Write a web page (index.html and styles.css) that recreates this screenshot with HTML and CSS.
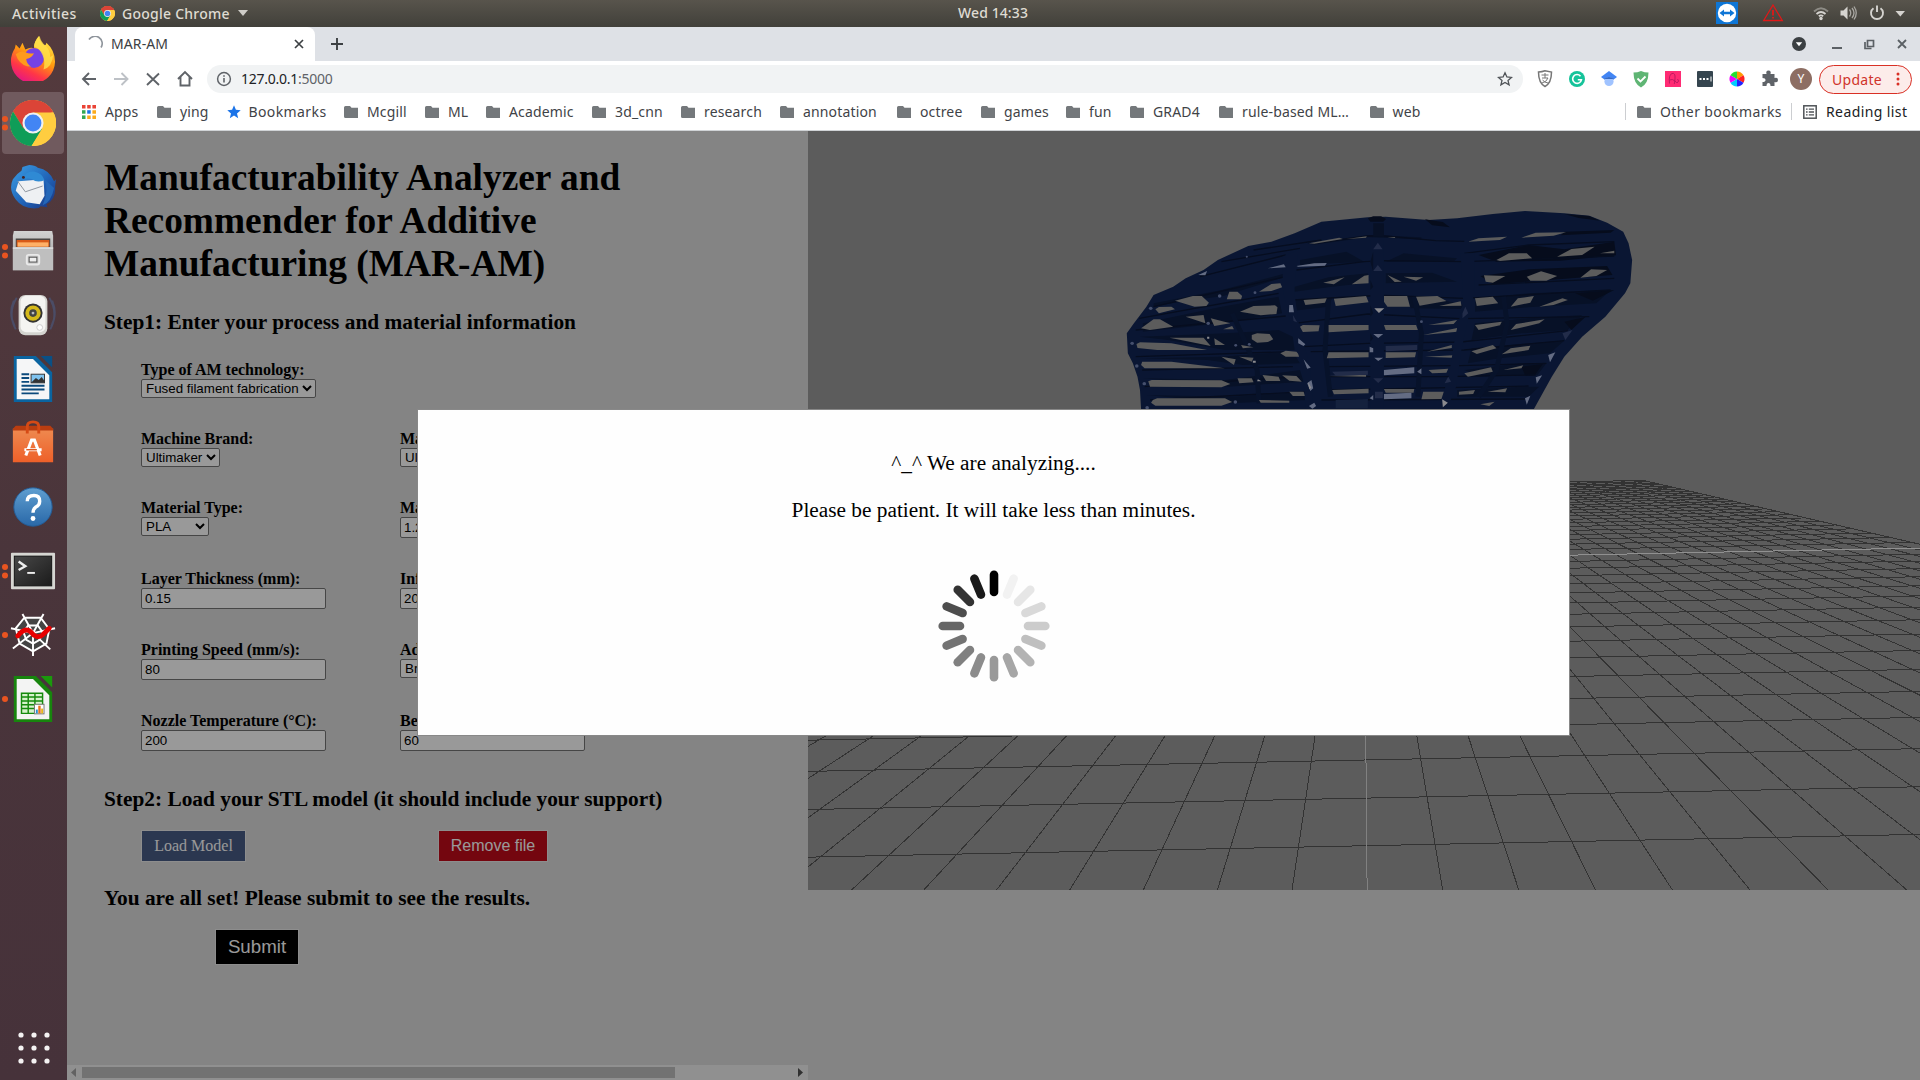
FILE: index.html
```html
<!DOCTYPE html>
<html lang="en">
<head>
<meta charset="utf-8">
<title>MAR-AM</title>
<link rel="stylesheet" href="styles.css">
</head>
<body>
<svg width="0" height="0" class="defs">
  <defs>
    <symbol id="folder" viewBox="0 0 14 12"><path fill="#74787b" d="M0 1.5Q0 0 1.5 0H6l1.5 1.8H14V12H1.5Q0 12 0 10.500z"/></symbol>
    <symbol id="chrome" viewBox="0 0 48 48">
      <circle cx="24" cy="24" r="24" fill="#fc4"/>
      <path fill="#db4437" d="M24 24 3.200 12A24 24 0 0 1 44.800 12z"/>
      <path fill="#db4437" d="M3.200 12 14 30 24 13H45A24 24 0 0 0 3.200 12z"/>
      <path fill="#0f9d58" d="M3.200 12A24 24 0 0 0 22.500 48L34 30 14 29.500z"/>
      <path fill="#ffcd40" d="M24 13H45.400A24 24 0 0 1 22.500 48L34 29z"/>
      <circle cx="24" cy="24" r="11" fill="#f1f1f1"/><circle cx="24" cy="24" r="8.800" fill="#4285f4"/>
    </symbol>
    <linearGradient id="fx" x1="0.8" y1="0" x2="0.300" y2="1"><stop offset="0" stop-color="#fff44f"/><stop offset=".45" stop-color="#ff980e"/><stop offset=".75" stop-color="#ff3647"/><stop offset="1" stop-color="#e31587"/></linearGradient>
    <linearGradient id="tb" x1="0" y1="0" x2="1" y2="1"><stop offset="0" stop-color="#3ba0e6"/><stop offset=".6" stop-color="#1f5fb4"/><stop offset="1" stop-color="#1b2f78"/></linearGradient>
    <linearGradient id="cab" x1="0" y1="0" x2="0" y2="1"><stop offset="0" stop-color="#d2d2d2"/><stop offset="1" stop-color="#969696"/></linearGradient>
    <linearGradient id="bag" x1="0" y1="0" x2="0" y2="1"><stop offset="0" stop-color="#ee8a50"/><stop offset="1" stop-color="#ee6029"/></linearGradient>
    <linearGradient id="hlp" x1="0" y1="0" x2="0" y2="1"><stop offset="0" stop-color="#5f9ed0"/><stop offset="1" stop-color="#2968a8"/></linearGradient>
    <linearGradient id="trm" x1="0" y1="0" x2="1" y2="1"><stop offset="0" stop-color="#484848"/><stop offset="1" stop-color="#1b1b1b"/></linearGradient>
  </defs>
</svg>

<header class="topbar">
  <span class="activities">Activities</span>
  <svg class="tb-chrome" width="15" height="15"><use href="#chrome"/></svg>
  <span class="appname">Google Chrome</span>
  <svg class="caret" width="10" height="6"><path d="M0 0h10L5 6z" fill="#cfcdc8"/></svg>
  <span class="clock">Wed 14:33</span>
  <svg class="tray" width="200" height="27" viewBox="1720 0 200 27">
    <rect x="1716" y="2" width="22" height="22" fill="#0e76d6"/>
    <circle cx="1727" cy="13" r="9.200" fill="#fff"/>
    <path d="M1719.500 13l4.500-3.500v2.300h6V9.500l4.500 3.500-4.500 3.500v-2.300h-6v2.300z" fill="#0e76d6"/>
    <path d="M1773 5l9.300 15.500h-18.600z" fill="none" stroke="#e01818" stroke-width="1.300"/><path d="M1773 10v5.500M1773 17v1.500" stroke="#e01818" stroke-width="1.800"/>
    <g fill="none" stroke="#d5d3cf" stroke-width="1.800"><path d="M1814 11.500q7-6.500 14 0" stroke="#8d8b85"/><path d="M1816.500 14q4.500-4 9 0"/><path d="M1818.800 16.300q2.200-1.800 4.400 0"/></g>
    <circle cx="1821" cy="18.500" r="1.700" fill="#d5d3cf"/>
    <path d="M1840.500 10.500h3l4-4v13l-4-4h-3z" fill="#d5d3cf"/><path d="M1849.500 9.500q2.500 3.500 0 7M1852 8q4 5 0 10M1854 6.500q4.500 6.500 0 13" fill="none" stroke="#a9a7a2" stroke-width="1.300"/>
    <path d="M1873.500 8.200a6 6 0 1 0 7 0M1877 5.500v6.500" fill="none" stroke="#d5d3cf" stroke-width="1.900"/>
    <path d="M1895.500 11h9.500l-4.700 5.500z" fill="#d5d3cf"/>
  </svg>
</header>

<div class="desktop">
  <nav class="dock">
    <div class="app"><svg viewBox="0 0 48 48"><path fill="url(#fx)" d="M5 14l1-4 4 4 3-6 3 7q6-3 9-1 0-7 5-13 1 6 6 10 2-1 2-3 9 8 9 20A23 23 0 0 1 1 27Q1 20 5 14z"/><circle cx="25" cy="24" r="10.500" fill="#7542e5"/><path fill="#ff9a1c" d="M6 20q5-4 10-2 4 2 9 1-2 5-8 6 0 5 5 8-9 0-14-8z"/><path fill="#ffe14c" d="M25 12Q25 7 31 1q1 6 6 10 5 5 5 12l3-2q-1 12-10 15 2-8-1-15-3-7-9-9z" opacity=".8"/></svg></div>
    <div class="app active"><i class="dots two"></i><svg viewBox="0 0 48 48"><use href="#chrome"/></svg></div>
    <div class="app"><svg viewBox="0 0 48 48"><path fill="url(#tb)" d="M13 3l7-2q6 0 9 3 12 2 17 14l2-2-1 8q1 13-9 18l1 3-7-1-2 2q-16 2-24-9Q-2 27 3 16q4-6 9-9z"/><path d="M9 18l26-2 1 17-5 9-14-2L6 28z" fill="#eef0f3"/><path d="M8 18l8 11 18-6" fill="none" stroke="#8b929c"/><path fill="#2f8ad4" d="M14 16Q15 7 26 8q8 2 10 9-8 3-13-1-5-2-9 0z"/><path d="M36 16q5 12-2 27 9-3 12-18z" fill="#2467b8"/><circle cx="14" cy="14" r="1.500" fill="#422"/></svg></div>
    <div class="app"><i class="dots two"></i><svg viewBox="0 0 48 48"><path d="M4 3h40l1 5v36H3V8z" fill="url(#cab)"/><path d="M6 11h36v9H6z" fill="#4a4644"/><path d="M7 12.500h34v7H7z" fill="#d85a18"/><path d="M8 15h32v4.500H8z" fill="#ffb066"/><path d="M3 20h42v24H3z" fill="#bfbfbf"/><path d="M3 20h42v2H3z" fill="#dadada"/><rect x="17.500" y="28" width="13" height="10" rx="2" fill="none" stroke="#e9e9e9" stroke-width="2"/><rect x="20" y="30.500" width="8" height="5" fill="#eee" stroke="#555"/></svg></div>
    <div class="app"><svg viewBox="0 0 48 48"><path d="M7 6Q-3 22 6 39M41 6q10 16 1 33M4 9q-6 14 1 27M44 9q6 14-1 27" fill="none" stroke="#48628f" stroke-width="2" opacity=".5"/><rect x="9" y="3" width="30" height="42" rx="7" fill="#d4d4d0"/><rect x="11" y="4" width="26" height="38" rx="6" fill="#f4f4f2"/><circle cx="24" cy="22" r="10" fill="#333"/><circle cx="24" cy="22" r="8" fill="#d5b91a"/><circle cx="24" cy="22" r="4" fill="#444"/><circle cx="24" cy="22" r="1.500" fill="#bbb"/><circle cx="31" cy="37" r="3" fill="#fff" stroke="#ccc"/></svg></div>
    <div class="app"><svg viewBox="0 0 48 48"><path d="M4 0h23l17 17v31H4z" fill="#0a64a0"/><path d="M7 3h17l17 17v25H7z" fill="#f5f6f7"/><path d="M32 0h12v12z" fill="#0a5085"/><path d="M12 19h8M12 23h8M12 27h8M12 31h24M12 35h24M12 39h18" stroke="#0b4a7c" stroke-width="2"/><rect x="22" y="19" width="14" height="9" fill="#7fc3ef" stroke="#333"/><path d="M22 28l5-5 3 2 3-3 3 4v2z" fill="#333"/></svg></div>
    <div class="app"><svg viewBox="0 0 48 48"><path d="M3 9h42v35H3z" fill="url(#bag)"/><path d="M3 9l3-3h36l3 3v2H3z" fill="#b93d10"/><path d="M18 14V7q0-5 6-5t6 5v7" fill="none" stroke="#d64a15" stroke-width="3"/><path d="M16.500 37l6-16h3l6 16M15 31h18" fill="none" stroke="#fff" stroke-width="3.200"/><path d="M17 31h11" stroke="#e05a20" stroke-width="1.500"/></svg></div>
    <div class="app"><svg viewBox="0 0 48 48"><circle cx="24" cy="24" r="20" fill="url(#hlp)" stroke="#235c97"/><path d="M18 18q0-6 7-6 6 0 6 6 0 4-4 6-3 2-3 6" fill="none" stroke="#fff" stroke-width="3.500"/><circle cx="24" cy="36" r="2.500" fill="#fff"/></svg></div>
    <div class="app"><i class="dots two"></i><svg viewBox="0 0 48 48"><rect x="1" y="5" width="46" height="38" rx="1" fill="#d6d6d2"/><rect x="4.500" y="8.500" width="39" height="31" fill="url(#trm)" stroke="#111"/><path d="M9 14l7 5-7 4" fill="none" stroke="#eee" stroke-width="2.500"/><path d="M18 26h8" stroke="#eee" stroke-width="2"/></svg></div>
    <div class="app"><i class="dots one"></i><svg viewBox="0 0 48 48"><path d="M15 6h17l9 12-3 15-14 8-14-8-4-16z" fill="#444"/><g fill="none" stroke="#fff" stroke-width="2"><path d="M15 6h17l9 12-3 15-14 8-14-8-4-16zM24 22L13 2M24 22L35 2M24 22l23-5M24 22l18 17M24 22v24M24 22L3 38M24 22L1 17"/><path d="M19 14h10l5 7-3 8-7 4-7-4-3-8z"/></g><path d="M8 25q7-9 13-5 7 9 13 4l7-7" fill="none" stroke="#e80000" stroke-width="5" stroke-linecap="round"/></svg></div>
    <div class="app"><i class="dots one"></i><svg viewBox="0 0 48 48"><path d="M4 0h23l17 17v31H4z" fill="#17850d"/><path d="M7 3h17l17 17v25H7z" fill="#f3f4f3"/><path d="M32 0h12v12z" fill="#1a9a0c"/><rect x="12" y="18" width="22" height="21" fill="#d6f2cc"/><path d="M12 18h22v21H12zM12 22h22M12 26h22M12 30h22M12 34h22M19 18v21M26 18v21" fill="none" stroke="#158a0c" stroke-width="1.500"/><rect x="25.500" y="29.500" width="10" height="10" fill="#fff" stroke="#777"/><path d="M27 39v-4h2v4z" fill="#2a8fd0"/><path d="M29.500 39v-8h2.500v8z" fill="#e8731a"/><path d="M32.500 39v-5h2v5z" fill="#e8b51a"/></svg></div>
    <svg class="grid-btn" width="32" height="32" viewBox="0 0 32 32"><g fill="#f4f2f2"><circle cx="3" cy="3" r="2.600"/><circle cx="16" cy="3" r="2.600"/><circle cx="29" cy="3" r="2.600"/><circle cx="3" cy="16" r="2.600"/><circle cx="16" cy="16" r="2.600"/><circle cx="29" cy="16" r="2.600"/><circle cx="3" cy="29" r="2.600"/><circle cx="16" cy="29" r="2.600"/><circle cx="29" cy="29" r="2.600"/></g></svg>
  </nav>

  <div class="browser">
    <div class="tabstrip">
      <div class="tab">
        <svg width="16" height="16" viewBox="0 0 16 16"><path d="M2 3.500A7 7 0 0 1 14 11.500" fill="none" stroke="#8f959c" stroke-width="1.600"/></svg>
        <span class="tab-title">MAR-AM</span>
        <svg width="10" height="10" viewBox="0 0 10 10"><path d="M1 1l8 8M9 1L1 9" stroke="#3c4043" stroke-width="1.700"/></svg>
      </div>
      <svg class="plus" width="12" height="12" viewBox="0 0 12 12"><path d="M6 0v12M0 6h12" stroke="#3c4043" stroke-width="1.900"/></svg>
      <svg class="winctl" width="130" height="34" viewBox="1790 27 130 34">
        <circle cx="1799" cy="44" r="7" fill="#3c4043"/><path d="M1795.800 42.200h6.400l-3.200 4z" fill="#fff"/>
        <path d="M1832 48h10" stroke="#5b6065" stroke-width="2"/>
        <path d="M1867.500 40.500h6v6h-6zM1865 42v6.500h6.500" fill="none" stroke="#5b6065" stroke-width="1.700"/>
        <path d="M1898 40l8 8M1906 40l-8 8" stroke="#5b6065" stroke-width="1.800"/>
      </svg>
    </div>
    <div class="toolbar">
      <svg width="115" height="36" viewBox="80 61 115 36" fill="none" stroke="#5f6368" stroke-width="1.900">
        <path d="M96 79H83.500M89 73l-6 6 6 6"/><path d="M114 79h13M121.500 73l6 6-6 6" stroke="#bdc1c6"/><path d="M147 73.500l12 11.500M159 73.500l-12 11.500"/><path d="M178 79l7-7 7 7M180.500 77v8.500h9V77"/>
      </svg>
      <div class="omnibox">
        <svg width="16" height="16" viewBox="0 0 16 16"><circle cx="8" cy="8" r="6.400" fill="none" stroke="#5f6368" stroke-width="1.500"/><path d="M8 7v4.500M8 4.300v1.500" stroke="#5f6368" stroke-width="1.600"/></svg>
        <span class="url">127.0.0.1<em>:5000</em></span>
        <svg width="16" height="16" viewBox="0 0 16 16"><path d="M8 1.800l1.900 4.200 4.600.4-3.500 3 1.100 4.500L8 11.500l-4.100 2.400L5 9.400l-3.500-3 4.600-.4z" fill="none" stroke="#4f5357" stroke-width="1.300"/></svg>
      </div>
      <svg class="exts" width="282" height="36" viewBox="1532 61 282 36">
        <path d="M1545 72q3.500 0 6.500-1.200l6.500 1.200q0 11-6.500 14.500-6.500-3.500-6.500-14.500z" transform="translate(-6.500)" fill="none" stroke="#777" stroke-width="1.500"/>
        <path d="M1541.500 75h7M1545 73v5M1542 78h6q-1.500 4-6 5M1542.500 80q2 2.500 5.500 3" fill="none" stroke="#777"/>
        <circle cx="1577" cy="79" r="8" fill="#15c39a"/><path d="M1580.500 76.200a4.400 4.400 0 1 0 .9 3.600h-3.600" fill="none" stroke="#fff" stroke-width="1.600"/>
        <path d="M1609 71l8 6-8 6-8-6z" fill="#4285f4"/><circle cx="1609" cy="81.500" r="4.600" fill="#a0c3ff"/><path d="M1604 79q5-4 10 0" fill="#356ac3"/>
        <path d="M1633.500 72.500q4 0 7.500-1.500 3.500 1.500 7.500 1.500 0 11-7.500 15-7.500-4-7.500-15z" fill="#5fb574"/><path d="M1637.500 78.500l3 3 5-5" fill="none" stroke="#fff" stroke-width="1.800"/>
        <rect x="1665" y="71" width="16" height="16" fill="#ff2b74"/><path d="M1669.500 83.500q-1-9 2.500-10t3 5-1 5.500M1669.500 80q3-1.500 5.500 1t2 2q3-2 .5-4" fill="none" stroke="#b5185f" stroke-width=".9"/>
        <rect x="1697" y="71" width="16" height="16" rx="1" fill="#35454f"/><path d="M1699.500 79h2M1703 79h2M1706.500 79h2M1710 79v0" stroke="#fff" stroke-width="2"/><path d="M1711 76.500v5" stroke="#fff"/>
        <g transform="translate(1737 79)"><path d="M0 0V-7.500A7.500 7.500 0 0 1 6.500-3.700z" fill="#f90"/><path d="M0 0L6.500-3.700A7.500 7.500 0 0 1 6.500 3.700z" fill="#f22"/><path d="M0 0L6.500 3.700A7.500 7.500 0 0 1 0 7.500z" fill="#22f"/><path d="M0 0V7.500A7.500 7.500 0 0 1-6.500 3.700z" fill="#0cf"/><path d="M0 0L-6.500 3.700A7.500 7.500 0 0 1-6.500-3.700z" fill="#e0f"/><path d="M0 0L-6.500-3.700A7.500 7.500 0 0 1 0-7.500z" fill="#2d3"/></g>
        <path d="M1762 75h4q-1-3.500 2-3.500t2 3.500h4v4q3.500-1 3.500 2t-3.500 2v4h-4q0-3-2-3t-2 3h-4v-4q3 0 3-2t-3-2z" fill="#5f6368" transform="translate(.5 -1)"/>
        <circle cx="1801" cy="79" r="11" fill="#8d6e63"/>
        <text x="1801" y="83" text-anchor="middle" class="avatar">Y</text>
      </svg>
      <div class="update">Update<svg width="4" height="14" viewBox="0 0 4 14" fill="#d93025"><circle cx="2" cy="2" r="1.500"/><circle cx="2" cy="7" r="1.500"/><circle cx="2" cy="12" r="1.500"/></svg></div>
    </div>
    <div class="bookmarks">
      <div class="bm w75"><svg width="14" height="14" viewBox="0 0 14 14"><path d="M0 0h3.500v3.500H0zM5.200 0h3.500v3.500H5.200zM10.400 0H14v3.500h-3.600z" fill="#ea4335"/><path d="M0 5.200h3.500v3.500H0z" fill="#34a853"/><path d="M5.200 5.200h3.500v3.500H5.200z" fill="#1a73e8"/><path d="M10.400 5.200H14v3.500h-3.600zM5.200 10.400h3.500V14H5.200zM10.400 10.400H14V14h-3.600z" fill="#fbab1c"/><path d="M0 10.400h3.500V14H0z" fill="#34a853"/></svg><span>Apps</span></div>
      <div class="bm w70"><svg width="14" height="12"><use href="#folder"/></svg><span>ying</span></div>
      <div class="bm star w117"><svg width="14" height="14" viewBox="0 0 14 14"><path d="M7 .3l1.900 4.500 4.800.4-3.700 3.200 1.200 4.800L7 10.600l-4.200 2.600L4 8.400.3 5.200l4.800-.4z" fill="#1a73e8"/></svg><span>Bookmarks</span></div>
      <div class="bm w81"><svg width="14" height="12"><use href="#folder"/></svg><span>Mcgill</span></div>
      <div class="bm w61"><svg width="14" height="12"><use href="#folder"/></svg><span>ML</span></div>
      <div class="bm w106"><svg width="14" height="12"><use href="#folder"/></svg><span>Academic</span></div>
      <div class="bm w89"><svg width="14" height="12"><use href="#folder"/></svg><span>3d_cnn</span></div>
      <div class="bm w99"><svg width="14" height="12"><use href="#folder"/></svg><span>research</span></div>
      <div class="bm w117"><svg width="14" height="12"><use href="#folder"/></svg><span>annotation</span></div>
      <div class="bm w84"><svg width="14" height="12"><use href="#folder"/></svg><span>octree</span></div>
      <div class="bm w85"><svg width="14" height="12"><use href="#folder"/></svg><span>games</span></div>
      <div class="bm w64"><svg width="14" height="12"><use href="#folder"/></svg><span>fun</span></div>
      <div class="bm w89"><svg width="14" height="12"><use href="#folder"/></svg><span>GRAD4</span></div>
      <div class="bm w150"><svg width="14" height="12"><use href="#folder"/></svg><span>rule-based ML…</span></div>
      <div class="bm"><svg width="14" height="12"><use href="#folder"/></svg><span>web</span></div>
      <div class="bm-right">
        <div class="bm sep w166"><svg width="14" height="12"><use href="#folder"/></svg><span>Other bookmarks</span></div>
        <div class="bm sep reading"><svg width="14" height="14" viewBox="0 0 14 14"><rect x=".8" y=".8" width="12.400" height="12.400" fill="none" stroke="#4f5357" stroke-width="1.500"/><path d="M3 4.200h1.600M3 7h1.600M3 9.800h1.600M5.800 4.200H11M5.800 7H11M5.800 9.800H11" stroke="#4f5357" stroke-width="1.300"/></svg><span>Reading list</span></div>
      </div>
    </div>

    <main class="page">
      <section class="form-panel">
        <h1>Manufacturability Analyzer and<br>Recommender for Additive<br>Manufacturing (MAR-AM)</h1>
        <h3 class="step1">Step1: Enter your process and material information</h3>
        <div class="fields">
          <label>Type of AM technology:<select class="s175"><option>Fused filament fabrication</option></select></label><span></span>
          <label>Machine Brand:<select class="s79"><option>Ultimaker</option></select></label>
          <label>Machine Type:<select class="s100"><option>Ultimaker S5</option></select></label>
          <label>Material Type:<select class="s68"><option>PLA</option></select></label>
          <label>Material Density:<input value="1.24"></label>
          <label>Layer Thickness (mm):<input value="0.15"></label>
          <label>Infill Density (%):<input value="20"></label>
          <label>Printing Speed (mm/s):<input value="80"></label>
          <label>Adhesion Type:<select class="s68"><option>Brim</option></select></label>
          <label>Nozzle Temperature (°C):<input value="200"></label>
          <label>Bed Temperature (°C):<input value="60"></label>
        </div>
        <h3 class="step2">Step2: Load your STL model (it should include your support)</h3>
        <div class="buttons"><span class="btn load">Load Model</span><span class="btn remove">Remove file</span></div>
        <h3 class="step3">You are all set! Please submit to see the results.</h3>
        <span class="btn submit">Submit</span>
        <div class="hscroll"><svg width="6" height="9"><path d="M5 0v9L0 4.500z" fill="#a3a3a3"/></svg><i></i><svg width="6" height="9"><path d="M0 0v9l5-4.500z" fill="#505050"/></svg></div>
      </section>
      <svg class="viewer" width="1112" height="759" viewBox="808 131 1112 759">
        <g id="floor" shape-rendering="crispEdges"></g>
        <g transform="translate(1100 190) scale(.35714 .33333)" stroke-linejoin="round">
          <path fill="#112656" d="M115 657L112 600 105 560 92 520 78 490 75 430 95 400 130 350 150 315 205 290 240 265 290 240 330 210 415 168 480 155 545 130 620 95 750 82 800 80 920 90 1000 85 1100 72 1190 63 1300 70 1370 77 1420 98 1465 125 1480 160 1490 210 1485 280 1470 310 1415 380 1350 440 1300 500 1265 560 1215 657z"/>
          <g fill="#0d1d42">
            <path d="M150 340L340 300 520 250 515 262 345 318 200 340 150 350zM120 400L340 350 500 320 510 370 340 400 120 425zM110 440L350 430 500 420 540 440 545 480 350 480 190 450zM110 505L330 500 540 485 560 520 400 525 300 510zM120 565L350 570 560 540 570 575 360 590 200 572zM130 615L370 620 580 605 585 630 360 640z"/>
            <path d="M580 160L750 135 900 142 900 148 750 142 600 164zM560 210L690 185 740 215 560 225zM800 215L850 190 1000 205 990 215zM545 290L640 262 750 250 750 278 640 292 545 305zM800 250L930 248 1000 275 800 280zM540 330L650 325 640 350 545 362zM860 318L920 320 1020 345 1010 357 870 355z"/>
            <path d="M1050 325L1200 310 1430 300 1390 340 1200 352 1050 365zM1050 400L1200 385 1350 375 1310 420 1180 430 1040 450zM1040 475L1200 460 1300 452 1260 490 1120 505 1030 520zM1020 540L1180 520 1250 520 1225 555 1060 560zM1000 600L1180 590 1230 590 1200 620 1000 620z"/>
          </g>
          <g fill="#0a1530">
            <path d="M1060 195L1200 165 1300 178 1440 155 1445 196 1290 212 1110 215zM1065 258L1200 238 1420 228 1435 255 1260 270 1100 283zM750 85l15-6h22l14 8-8 8h-36zM910 88l50 8 20 16-50-6zM1300 72l70 6 30 14-60-8zM1300 125l140-5-10 8-140 8zM1330 310l110-10-60 32zM1300 395l60-15-40 40zM1180 530l60-8-20 30-30 4z"/>
          </g>
          <g fill="none" stroke="#0a1634" stroke-width="4">
            <path d="M150 350L520 260M110 385L500 310M100 420L520 378M100 500L530 485M118 540L540 530M125 590L560 560M140 630L580 605M280 260L520 195M340 215L560 175M430 180L620 150M600 160L750 138 800 138 940 152 1020 154M540 330L750 318 800 316 1020 325 1430 300M545 400L750 372 1010 386 1370 380M570 470L750 460 1010 456 1310 422M590 485L1020 480 1300 452M640 530L1010 527 1250 520M640 560L960 560 1220 555M640 600L1200 588M620 630L1190 627M550 240L740 215 800 212 1020 215 1440 198M1020 190L1200 165 1440 155M1060 285L1440 265"/>
          </g>
          <g fill="none" stroke="#0d1e46" stroke-width="14">
            <path d="M370 370L400 440 440 540 445 640M640 330L630 480 645 620M880 320L900 430 890 620M1130 320L1140 400 1110 540 1060 620"/>
          </g>
          <g fill="#999">
            <path d="M210 332L260 318 285 318 305 338 298 348 265 350zM155 358L165 351 200 350 210 358 165 370zM362 305L385 305 398 318 395 328 355 328zM445 305L480 282 505 280 510 292 480 303zM392 365L430 348 490 346 497 352 494 372 450 376zM115 415L150 388 168 388 205 410 140 420zM240 380L290 375 295 400zM310 385L365 400 320 408zM345 418L370 408 375 418zM425 435L440 430 475 432 485 448 470 456 440 458 425 448zM195 443L290 443 310 468zM320 445L350 465 322 465zM395 465L430 472 400 475zM102 462L112 457 200 460 300 480 160 480 105 474zM505 490L520 482 550 485 562 500 520 500zM340 500L380 508 375 525zM390 500L430 503 425 515zM118 515L200 515 350 535 125 535 115 525zM455 555L500 560 505 573 465 573zM510 556L550 558 565 575 530 572zM135 574L145 570 340 571 365 582 340 592 140 590zM385 565L425 565 430 577 390 580zM530 605L570 605 575 618 540 618zM445 630L530 632 530 638 450 638zM148 630L160 625 350 625 370 636 340 647 155 647 143 638z"/>
            <path d="M585 160L670 143 680 147 600 161zM690 147L747 139 745 143zM805 142L825 141 827 144zM625 278L685 262 655 283zM705 283L740 257 752 255 752 280zM805 255L845 275 825 276zM850 260L905 262 885 272zM570 330L635 325 630 338 575 345zM655 326L745 318 752 337 660 348zM795 318H860L868 350H805L795 335zM885 320L945 318 970 333 895 347zM950 348L1010 334 1012 347zM560 410L568 405 615 406 612 424 568 426zM640 405H752V420L640 427zM795 405H885L890 420H800zM920 405L1000 390 990 402zM905 435L1000 414 1000 425zM640 487H752V502L635 505zM800 487H885L882 502 800 504zM915 485L985 465 985 474zM910 500L990 496 985 503zM650 600L752 596V610L655 613zM795 597H880L878 608H800zM905 605H965L960 627 900 628zM640 558L745 554 745 560zM920 540L975 536 970 548 930 550z"/>
            <path d="M1030 155L1060 145 1140 140 1120 150zM1180 143L1220 128 1305 127 1270 137zM1110 210L1145 190 1195 190 1210 205 1120 213zM1280 200L1320 177 1385 170 1350 195zM1075 256L1135 258 1100 278 1080 275zM1195 260L1235 244 1280 258 1250 272 1205 272zM1345 263L1375 238 1420 240 1390 258zM1400 190L1440 182 1440 190zM1050 325L1100 320 1115 340 1055 348zM1150 350L1170 325 1215 318 1205 338zM1230 350L1295 325 1310 330 1270 345zM1050 405L1125 395 1120 406 1060 420zM1150 420L1165 402 1245 388 1230 400zM1040 484L1100 465 1110 475 1055 492zM1125 493L1150 475 1205 467 1200 480zM1020 550L1095 532 1100 545 1030 560zM1130 540L1185 526 1180 535zM1005 605L1050 600 1045 612 1005 614zM1085 605L1140 595 1135 607zM1065 643L1105 635 1090 648z"/>
          </g>
          <g fill="#112656"><path d="M757 150h38v507h-38zM1010 190l38 0 2 110-18 80-20 100-15 110-25 67h-25l30-100 18-120 22-100zM510 200l45-20-12 120 15 110 30 120 10 127h-22l-8-110-30-130-25-110z"/></g>
          <g fill="#0c1b3e"><path d="M765 100h30v40h-30zM757 215l8-30v60zM757 300v-30l8 20zM757 380v-35l8 25zM757 455v-25l8 15z"/></g>
          <g fill="#a7b5db"><path d="M470 235L515 223 520 232zM550 228L600 220 635 219 630 227 555 230zM275 255L300 243 295 256zM530 345l10 0 3 22-14 0zM555 445l20 18-5 5-15-8zM570 508l20 25-10 3zM580 580l12-10 5 25-8 8zM585 648l15-10 5 10-10 8zM765 432h28l-14 12zM768 503h25l-14 10zM755 470l10 5v12h-10zM795 540L880 532V550L795 556zM888 545l12-10v18zM795 612L872 608V625L795 628zM755 625l10-10v15zM1255 495l20-8-15 30zM1220 562l18-6-15 25zM1190 625l15-8-10 27z"/></g>
          <g fill="#3a4a7b"><path d="M765 178l13-20 13 20zM765 243l13-18 13 18zM800 468L888 465V480L800 484zM1015 370l8-20 8 20-16 15zM1295 430l28-10-20 30zM765 565h28l-14 14zM770 605h22v20h-22zM965 580l10-20 8 15zM540 375l12 22-10-4zM650 545l100-3v12l-90 3z"/></g>
          <path d="M660 630l90-3v28h-90z" fill="#223766"/>
          <g fill="#e8e8ee"><path d="M768 355h28l-15 14zM958 628l16 10-14 14zM582 575l10 18-6 5zM428 512h8v6h-8zM442 568l10 6h-12zM300 440h6v6h-6z"/></g>
          <g fill="#7384b5"><circle cx="142" cy="355" r="5"/><circle cx="90" cy="460" r="5"/><circle cx="103" cy="528" r="5"/><circle cx="124" cy="581" r="5"/><circle cx="132" cy="653" r="5"/><circle cx="303" cy="400" r="5"/><circle cx="335" cy="318" r="5"/><circle cx="380" cy="466" r="4"/><circle cx="418" cy="463" r="4"/><circle cx="411" cy="200" r="3"/><circle cx="434" cy="308" r="4"/><circle cx="379" cy="636" r="5"/><circle cx="900" cy="395" r="4"/></g>
        </g>
      </svg>
      <div class="overlay">
        <div class="modal">
          <p>^_^ We are analyzing....</p>
          <p>Please be patient. It will take less than minutes.</p>
          <svg id="spinner" width="120" height="120" viewBox="-60 -60 120 120"></svg>
        </div>
      </div>
    </main>
  </div>
</div>
<script src="scene.js"></script>
</body>
</html>
```
FILE: scene.js
```js
const NS = 'http://www.w3.org/2000/svg';
function line(parent, x1, y1, x2, y2, stroke, width) {
  const el = document.createElementNS(NS, 'line');
  const attrs = { x1, y1, x2, y2, stroke, 'stroke-width': width };
  for (const k in attrs) el.setAttribute(k, attrs[k]);
  parent.appendChild(el);
}

// Ground grid, 50 divisions, projected through the camera.
const floor = document.getElementById('floor');
function project(m, k) {
  const w = 24.03 - k;
  return [1363 + (30 + 548.4 * m) / w, 415.7 + (3453 - 0.0205 * 548.4 * m) / w];
}
for (let i = -25; i <= 25; i++) {
  if (i === 0) continue;
  line(floor, ...project(i, -25), ...project(i, 19), '#555', 1);
  if (i < 19) line(floor, ...project(-25, i), ...project(25, i), '#555', 1);
}
line(floor, ...project(-25, 0), ...project(25, 0), '#f0f0f0', 1);
line(floor, ...project(0, -25), ...project(0, 19), '#d8d8d8', 1);

// Sixteen spokes, fading counterclockwise from black; the last quarter fades faster.
const spinner = document.getElementById('spinner');
for (let i = 0; i < 16; i++) {
  const a = i * Math.PI / 8, s = Math.sin(a), c = -Math.cos(a);
  const v = i === 0 ? 0 : Math.round(i <= 12 ? 255 - 12.75 * i : 102 - 25.5 * (i - 12));
  line(spinner, 34 * s, 34 * c, 51.3 * s, 51.3 * c, `rgb(${v},${v},${v})`, 8.6);
}
```
FILE: styles.css
```css
* { box-sizing: border-box; }
body { margin: 0; width: 1920px; height: 1080px; overflow: hidden; display: flex; flex-direction: column; font-family: "Noto Sans", "Open Sans", sans-serif; }
svg { display: block; flex: none; }
.defs { position: absolute; }
.topbar { height: 27px; flex: none; display: flex; align-items: center; background: linear-gradient(#58544c, #41403a); color: #dfdbd2; font-size: 14px; font-weight: 500; position: relative; padding: 0 0 1px 12px; white-space: nowrap; }
.activities { width: 88px; letter-spacing: .45px; }
.appname { margin-left: 7px; width: 111px; letter-spacing: .25px; }
.caret { margin-left: 5px; }
.clock { position: absolute; left: 958px; top: 3px; font-size: 14px; letter-spacing: .1px; }
.tray { margin-left: auto; overflow: visible; }

.desktop { display: flex; height: 1053px; }
.dock { width: 67px; flex: none; display: flex; flex-direction: column; align-items: center; background: linear-gradient(#543a3d, #4a353b 50%, #46323a); }
.app { position: relative; width: 62px; height: 62px; margin: 0 1px 2px 0; display: flex; align-items: center; justify-content: center; }
.app svg { width: 46px; height: 46px; }
.app.active { background: #705a5e; border-radius: 4px; margin-top: 1px; }
.dots { position: absolute; left: 0; top: 28px; width: 6px; height: 6px; border-radius: 50%; background: #e95420; }
.dots.two { top: 24px; box-shadow: 0 8.500px #e95420; }
.grid-btn { margin: auto 0 16px; }

.browser { width: 1853px; display: flex; flex-direction: column; background: #fff; }
.tabstrip { height: 34px; background: #dee1e6; display: flex; align-items: center; padding-left: 8px; }
.tab { width: 240px; height: 34px; background: #fff; border-radius: 8px 8px 0 0; display: flex; align-items: center; padding: 0 11px 0 12px; }
.tab-title { flex: 1; margin: -1px 0 0 8px; font-size: 14px; letter-spacing: .1px; color: #3c4043; }
.plus { margin-left: 16px; }
.winctl { margin-left: auto; }
.toolbar { height: 36px; display: flex; align-items: center; padding-left: 13px; }
.omnibox { margin-left: 12px; width: 1316px; height: 28px; border-radius: 14px; background: #f1f3f4; display: flex; align-items: center; padding: 0 10px 0 9px; }
.url { flex: 1; margin: -2px 0 0 9px; font-size: 14px; letter-spacing: -.25px; color: #202124; }
.url em { font-style: normal; color: #5f6368; }
.exts { margin-left: 9px; }
.avatar { font: 12px "Noto Sans", sans-serif; fill: #fff; }
.update { margin-left: 5px; width: 93px; height: 29px; border: 1px solid #d93025; border-radius: 15px; background: #fcecea; color: #d0342a; font-size: 14px; display: flex; align-items: center; justify-content: space-between; padding: 0 11px 0 12px; letter-spacing: .3px; }
.bookmarks { height: 34px; border-bottom: 1px solid #d0d3d6; display: flex; align-items: center; padding: 0 0 4px 15px; font-size: 14px; letter-spacing: .15px; color: #3f4347; white-space: nowrap; }
.bm { display: flex; align-items: center; gap: 9px; flex: none; }
.bm.star { gap: 7.500px; letter-spacing: .4px; }
.w61 { width: 61px; } .w64 { width: 64px; } .w70 { width: 70px; } .w75 { width: 75px; } .w81 { width: 81px; } .w84 { width: 84px; } .w85 { width: 85px; } .w89 { width: 89px; } .w99 { width: 99px; } .w106 { width: 106px; } .w117 { width: 117px; } .w150 { width: 150.500px; } .w166 { width: 166px; }
.bm-right { margin-left: auto; display: flex; letter-spacing: .4px; }
.sep { border-left: 1px solid #ccced1; padding-left: 11px; height: 17px; }
.reading { width: 129px; color: #202124; }

.page { position: relative; height: 949px; background: #dcdcdc; display: flex; align-items: flex-start; font-family: "Liberation Serif", serif; color: #000; }
.form-panel { width: 741px; height: 949px; padding: 25px 0 0 37px; display: flex; flex-direction: column; }
h1 { margin: 0; font-size: 37.380px; line-height: 43px; white-space: nowrap; }
h3 { margin: 0; font-size: 21.350px; line-height: 24px; white-space: nowrap; }
.step1 { margin-top: 25px; }
.fields { margin: 27px 0 0 37px; display: grid; grid-template-columns: 259px 200px; row-gap: 32px; }
label { display: flex; flex-direction: column; align-items: flex-start; font-size: 16px; line-height: 18px; font-weight: bold; white-space: nowrap; }
select, input { font: 13.333px "Liberation Sans", sans-serif; color: #000; background: #fff; border: 1px solid #767676; border-radius: 2px; margin: 0; }
select { height: 19px; padding: 0; }
input { width: 185px; height: 21px; padding: 1px 3px; }
.s175 { width: 175px; } .s79 { width: 79px; } .s68 { width: 68px; } .s100 { width: 100px; }
.step2 { margin-top: 36px; }
.buttons { display: flex; margin: 19px 0 0 37px; gap: 192px; }
.btn { display: flex; align-items: center; justify-content: center; color: #fff; border: 1px solid #ececec; font-size: 16px; white-space: nowrap; }
.load { width: 105px; height: 32px; background: #495d85; }
.remove { width: 110px; height: 32px; background: #c20a19; font-family: "Liberation Sans", sans-serif; }
.step3 { margin-top: 24px; }
.submit { margin: 19px 0 0 111px; width: 84px; height: 36px; background: #000; font: 18.700px "Liberation Sans", sans-serif; }
.hscroll { margin: auto 0 0 -37px; height: 15px; background: #f0f0f0; display: flex; align-items: center; padding: 0 4px; }
.hscroll i { width: 593px; height: 11px; background: #bfbfbf; margin: 0 auto 0 5px; }
.viewer { background: #999; overflow: hidden; }
.overlay { position: absolute; inset: 0; background: rgba(0, 0, 0, .4); }
.modal { width: 1153px; height: 327px; margin: 278px 0 0 350px; background: #fefefe; border: 1px solid #888; display: flex; flex-direction: column; align-items: center; padding-top: 41px; font-size: 21.330px; }
.modal p { margin: 0 0 23px; line-height: 24px; }
#spinner { margin-top: 20.500px; stroke-linecap: round; }
```
